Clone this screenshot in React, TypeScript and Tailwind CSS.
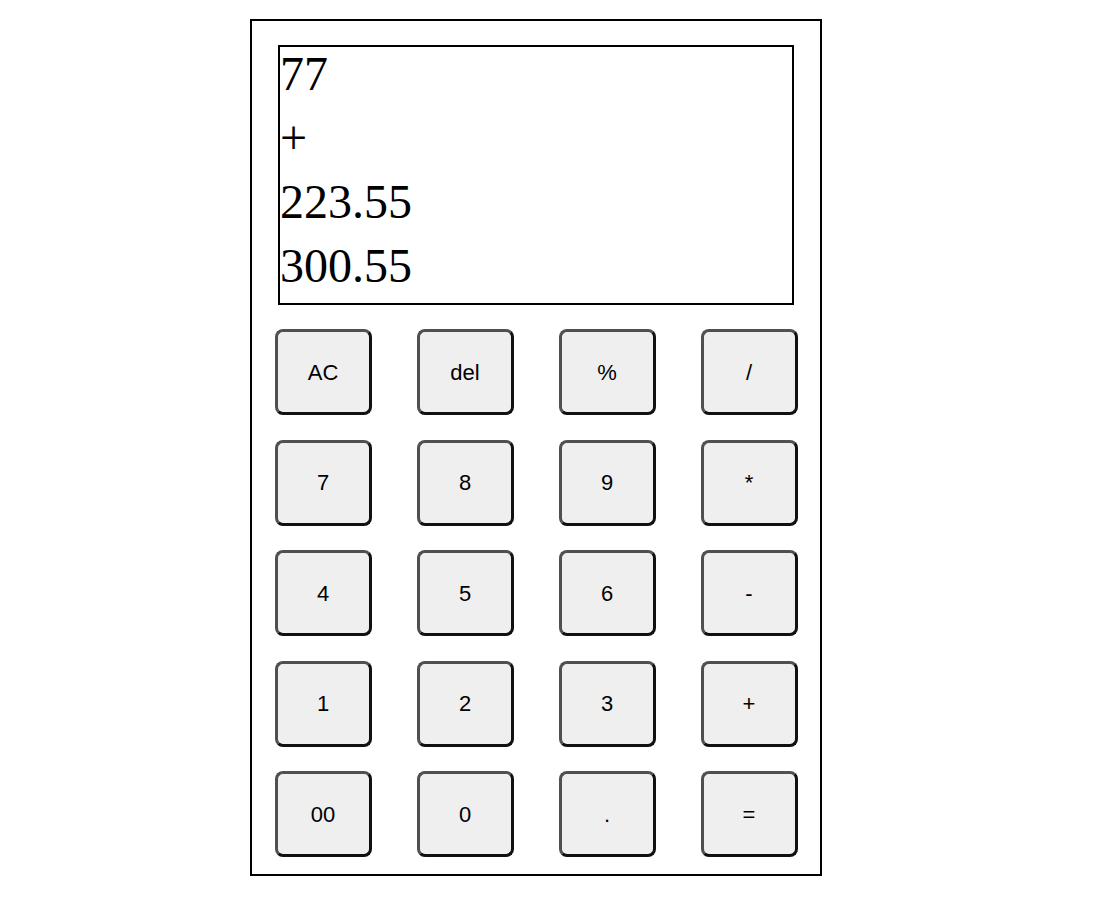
import React from "react";

const keys: string[] = [
	"AC", "del", "%", "/",
	"7", "8", "9", "*",
	"4", "5", "6", "-",
	"1", "2", "3", "+",
	"00", "0", ".", "=",
];

const lines: string[] = ["77", "+", "223.55", "300.55"];

export default function App() {
	return (
		<div className="min-h-screen bg-white pt-[19px]">
			<div className="ml-[250px] w-[572px] border-2 border-black pt-[24px] pb-[17px]">
				<div className="mx-[26px] w-[516px] border-2 border-black font-['Liberation_Serif',serif] text-[48px] leading-[53px] text-black">
					{lines.map((line, i) => (
						<div key={i} className="mb-[11px] whitespace-nowrap">
							{line}
						</div>
					))}
				</div>
				<div className="mt-[24px] grid grid-cols-4 gap-y-[24.5px]">
					{keys.map((k) => (
						<div key={k} className="flex justify-center">
							<button className="h-[86px] w-[97px] rounded-[8px] border-[3px] border-t-[#505050] border-l-[#505050] border-b-[#111] border-r-[#111] bg-[#efefef] font-['Liberation_Sans',Arial,sans-serif] text-[22px] text-black">
								{k}
							</button>
						</div>
					))}
				</div>
			</div>
		</div>
	);
}
